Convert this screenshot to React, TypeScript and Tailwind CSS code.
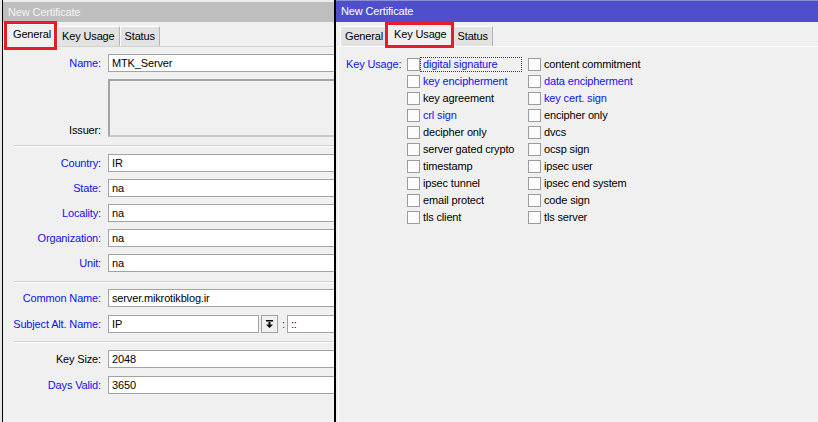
import React from 'react';

type Field = { label: string; value: string; blue?: boolean; mt: string };

const subjectFields: Field[] = [
  { label: 'Country:', value: 'IR', blue: true, mt: 'mt-[7px]' },
  { label: 'State:', value: 'na', blue: true, mt: 'mt-[7px]' },
  { label: 'Locality:', value: 'na', blue: true, mt: 'mt-[7px]' },
  { label: 'Organization:', value: 'na', blue: true, mt: 'mt-[7px]' },
  { label: 'Unit:', value: 'na', blue: true, mt: 'mt-[7px]' },
];

const colOne = [
  { label: 'digital signature', blue: true, focus: true },
  { label: 'key encipherment', blue: true },
  { label: 'key agreement' },
  { label: 'crl sign', blue: true },
  { label: 'decipher only' },
  { label: 'server gated crypto' },
  { label: 'timestamp' },
  { label: 'ipsec tunnel' },
  { label: 'email protect' },
  { label: 'tls client' },
];

const colTwo = [
  { label: 'content commitment' },
  { label: 'data encipherment', blue: true },
  { label: 'key cert. sign', blue: true },
  { label: 'encipher only' },
  { label: 'dvcs' },
  { label: 'ocsp sign' },
  { label: 'ipsec user' },
  { label: 'ipsec end system' },
  { label: 'code sign' },
  { label: 'tls server' },
];

function Tab({ label, active }: { label: string; active?: boolean }) {
  if (active) {
    return (
      <div className="relative z-10 -mb-px h-[23px] px-[5px] pt-[3px] bg-[#f0f0f0] border-l border-t border-white border-r border-r-[#a0a0a0] text-black whitespace-nowrap">
        {label}
      </div>
    );
  }
  return (
    <div className="h-[20px] px-[4px] bg-[#e2e2e2] border-l border-t border-white border-r border-r-[#b4b4b4] flex items-center text-black whitespace-nowrap">
      {label}
    </div>
  );
}

function Label({ text, blue }: { text: string; blue?: boolean }) {
  return (
    <div className={`w-[98px] shrink-0 text-right whitespace-nowrap ${blue ? 'text-[#1212f2]' : 'text-black'}`}>
      {text}
    </div>
  );
}

function TextBox({ value, wide = true }: { value: string; wide?: boolean }) {
  return (
    <div
      className={`${wide ? 'w-[240px]' : 'w-[151px]'} h-[18px] shrink-0 bg-white border border-[#a3a3a3] pl-[3px] leading-[16px] text-black whitespace-nowrap overflow-hidden`}
    >
      {value}
    </div>
  );
}

function FieldRow({ label, value, blue, mt }: Field) {
  return (
    <div className={`flex items-center h-[18px] ${mt}`}>
      <Label text={label} blue={blue} />
      <div className="ml-[7px]">
        <TextBox value={value} />
      </div>
    </div>
  );
}

function Separator({ mt }: { mt: string }) {
  return <div className={`ml-[11px] w-[340px] h-[2px] border-t border-[#d0d0d0] border-b border-b-white ${mt}`} />;
}

function LeftWindow() {
  return (
    <div className="relative w-[332px] shrink-0 h-full border-l border-black overflow-hidden bg-[#f0f0f0] flex flex-col">
      <div className="h-[2px] bg-[#ececec]" />
      <div className="h-[20px] bg-[#bebebe] text-[#f3f3f3] pl-[5px] flex items-center whitespace-nowrap">New Certificate</div>
      <div className="flex items-end h-[24px] pl-[4px]">
        <Tab label="General" active />
        <Tab label="Key Usage" />
        <Tab label="Status" />
      </div>
      <div className="flex-1 border-t border-[#d2d2d2]">
        <FieldRow label="Name:" value="MTK_Server" blue mt="mt-[7px]" />

        <div className="flex items-end h-[58px] mt-[7px]">
          <Label text="Issuer:" />
          <div className="ml-[7px] w-[240px] h-[58px] shrink-0 bg-[#f0f0f0] border-2 border-[#a3a3a3] border-b-[#c8c8c8]" />
        </div>

        <Separator mt="mt-[8px]" />
        {subjectFields.map((f) => (
          <FieldRow key={f.label} {...f} />
        ))}

        <Separator mt="mt-[9px]" />
        <FieldRow label="Common Name:" value="server.mikrotikblog.ir" blue mt="mt-[6px]" />
        <div className="flex items-center h-[18px] mt-[8px]">
          <Label text="Subject Alt. Name:" blue />
          <div className="ml-[7px]">
            <TextBox value="IP" wide={false} />
          </div>
          <div className="ml-[2px] w-[17px] h-[18px] shrink-0 bg-[#f0f0f0] border border-[#a0a0a0] flex items-center justify-center">
            <svg width="9" height="8" viewBox="0 0 9 8">
              <rect x="1" y="0" width="7" height="1.5" fill="#000" />
              <rect x="3.5" y="2" width="2" height="2.5" fill="#000" />
              <polygon points="1,4.5 8,4.5 4.5,8" fill="#000" />
            </svg>
          </div>
          <span className="ml-[4px] text-[#1212f2]">:</span>
          <div className="ml-[2px] w-[80px] h-[18px] shrink-0 bg-white border border-[#a3a3a3] pl-[3px] leading-[16px]">::</div>
        </div>

        <Separator mt="mt-[8px]" />
        <FieldRow label="Key Size:" value="2048" mt="mt-[7px]" />
        <FieldRow label="Days Valid:" value="3650" blue mt="mt-[8px]" />
      </div>

      <div className="absolute left-[1px] top-[21px] w-[53px] h-[29px] border-[3px] border-[#e81c24] z-20" />
    </div>
  );
}

function CheckRow({ label, blue, focus }: { label: string; blue?: boolean; focus?: boolean }) {
  return (
    <div className="flex items-center h-[17px]">
      <div className="w-[13px] h-[13px] shrink-0 bg-[#fcfcfc] border border-[#9c9c9c]" />
      <div
        className={`h-[15px] flex items-center px-[2px] border whitespace-nowrap ${
          focus ? 'w-[102px] border-dotted border-[#3a3a3a]' : 'border-transparent'
        } ${blue ? 'text-[#1212f2]' : 'text-black'}`}
      >
        {label}
      </div>
    </div>
  );
}

function RightWindow() {
  return (
    <div className="relative flex-1 h-full border-l-2 border-black bg-[#f0f0f0] flex flex-col overflow-hidden">
      <div className="h-[1px] bg-[#8d8dd9]" />
      <div className="h-[21px] bg-[#4f4fcb] text-white pl-[5px] flex items-center whitespace-nowrap">New Certificate</div>
      <div className="flex items-end h-[24px] pl-[4px]">
        <Tab label="General" />
        <Tab label="Key Usage" active />
        <Tab label="Status" />
      </div>
      <div className="ml-[2px] flex-1 border-t border-l border-white pl-[7px] pt-[9px] flex">
        <div className="w-[61px] shrink-0 h-[17px] flex items-center text-[#1212f2] whitespace-nowrap">Key Usage:</div>
        <div className="w-[121px] shrink-0 flex flex-col">
          {colOne.map((c) => (
            <CheckRow key={c.label} {...c} />
          ))}
        </div>
        <div className="flex flex-col">
          {colTwo.map((c) => (
            <CheckRow key={c.label} {...c} />
          ))}
        </div>
      </div>

      <div className="absolute left-[49px] top-[22px] w-[69px] h-[26px] border-[3px] border-[#e81c24] z-20" />
    </div>
  );
}

export default function App() {
  return (
    <div className="flex w-[818px] h-[422px] overflow-hidden bg-[#f0f0f0] font-['Liberation_Sans',Arial,sans-serif] text-[11px] leading-[13px] tracking-[-0.15px] select-none">
      <div className="w-[2px] shrink-0 bg-[#e6e6e6]" />
      <LeftWindow />
      <RightWindow />
    </div>
  );
}
